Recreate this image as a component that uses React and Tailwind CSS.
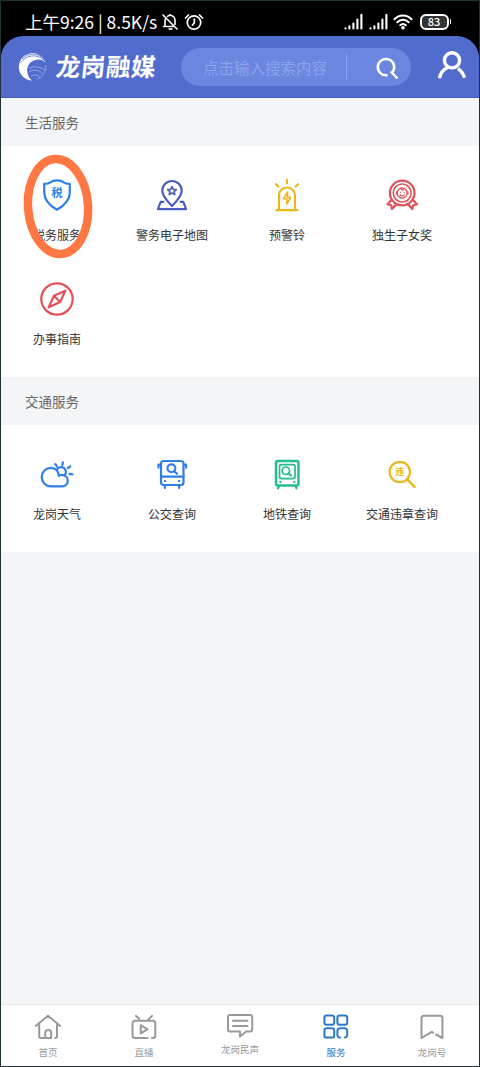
import React from "react";

const stroke = {
  fill: "none",
  stroke: "currentColor",
  strokeLinecap: "round",
  strokeLinejoin: "round",
};

const ServiceIcon = ({ className, children }) => (
  <svg viewBox="0 0 40 40" className={`h-10 w-10 ${className}`} strokeWidth="2.200" {...stroke}>
    {children}
  </svg>
);

const TaxIcon = () => (
  <ServiceIcon className="text-[#2f7fe6]">
    <path d="M20 5.3c-3 0-5.2.7-6.6 2-1.6 1.2-3.5 1.7-6.2 1.6v8.3c0 8 5.8 13.6 12.8 17.5 7-3.9 12.8-9.5 12.8-17.5V8.9c-2.7.1-4.6-.4-6.2-1.6-1.4-1.3-3.6-2-6.6-2z" />
    <text x="20" y="22" fontSize="11" fontWeight="700" textAnchor="middle" fill="currentColor" stroke="none">
      税
    </text>
  </ServiceIcon>
);

const MapIcon = () => (
  <ServiceIcon className="text-[#4a5fc0]">
    <path d="M20 31c-3.500-3.800-9.700-9.500-9.700-15.300a9.700 9.700 0 0 1 19.400 0C29.700 21.500 23.500 27.200 20 31z" />
    <path d="m20 11.600 1.300 2.700 3 .3-2.200 2 .6 3-2.700-1.500-2.700 1.500.6-3-2.200-2 3-.3z" strokeWidth="1.700" />
    <path d="M11.500 26.800H8.700L5.900 34.200h28.200l-2.800-7.400h-2.800" />
  </ServiceIcon>
);

const AlarmIcon = () => (
  <ServiceIcon className="text-[#edb61e]">
    <path d="M12 34.500V20.500a8 8 0 0 1 16 0v14M9.700 35.200h20.800M20 4.800v3.600M8.900 9.200l2.500 2.300M31.100 9.200l-2.500 2.300" />
    <path d="m20.500 17-4 6.800h3.200V29l4-6.600h-3.200z" strokeWidth="1.600" />
  </ServiceIcon>
);

const MedalIcon = () => (
  <ServiceIcon className="text-[#e25159]">
    <circle cx="20.200" cy="18" r="12.300" />
    <circle cx="20.200" cy="18" r="9" strokeWidth="1.500" />
    <circle cx="20.200" cy="18" r="5" strokeWidth="1.300" />
    <path d="M18.300 17.300h.1M22.100 17.300h.1M18.200 19.800c1 1.500 3 1.500 4 0M19 13.500c.3 1.200 1.400 1.600 2.400 1.300M14.500 17v2M25.900 17v2" strokeWidth="1.300" />
    <path d="m9 25.500-3.600 3.800 3.700.9.900 3.700 5-5M31.400 25.500l3.600 3.800-3.700.9-.9 3.700-5-5" />
  </ServiceIcon>
);

const GuideIcon = () => (
  <ServiceIcon className="text-[#e25159]">
    <circle cx="20" cy="20" r="15.700" />
    <path d="M28.300 11.700 17 16.800l-5.300 11.500L23.200 23zM17 16.800l6.200 6.200" />
  </ServiceIcon>
);

const WeatherIcon = () => (
  <ServiceIcon className="text-[#2f7fe6]">
    <path d="M14 13.800a9.300 9.300 0 0 0 0 18.600h11.200a5.700 5.700 0 0 0 1.400-11.200c-1.500-.4-3.300-.2-4.800.6-.2-4.500-3.300-8-7.800-8z" />
    <path d="M19.800 15.800a4.800 4.800 0 1 1 7.700 5.500M18.300 10.200l1.900 2.400M25.900 8.300l-.6 2.600M33.300 12.300 31 14M35.500 20.400l-3-.5" />
  </ServiceIcon>
);

const BusIcon = () => (
  <ServiceIcon className="text-[#2f7fe6]">
    <rect x="9" y="7" width="22.500" height="24" rx="2.500" />
    <path d="M9 22.700h22.500M12.800 31.500V34M27.200 31.500V34M8 10.500H6.500v3.200M32.500 10.500H34v3.200M12.800 27h.4M26.900 27h.4M22.300 17.200l2.700 2.600" />
    <circle cx="19.400" cy="14.300" r="3.900" />
  </ServiceIcon>
);

const MetroIcon = () => (
  <ServiceIcon className="text-[#24bd8c]">
    <rect x="9" y="7" width="22.500" height="24.500" rx="2" strokeWidth="2.400" />
    <rect x="12.500" y="10.600" width="15.500" height="14" rx="2" strokeWidth="1.700" />
    <path d="m12 32-1 2.300M28.500 32l1 2.300M13.200 28h.4M27 28h.4M21.600 19.500l2.300 2" />
    <circle cx="18.900" cy="16.700" r="3.700" strokeWidth="1.700" />
  </ServiceIcon>
);

const ViolationIcon = () => (
  <ServiceIcon className="text-[#edb61e]">
    <circle cx="17.800" cy="18" r="10.200" />
    <path d="m25.500 25.700 7 7.200" strokeWidth="2.500" />
    <text x="17.800" y="21.300" fontSize="9" fontWeight="700" textAnchor="middle" fill="currentColor" stroke="none">
      违
    </text>
  </ServiceIcon>
);

const lifeServices = [
  { name: "税务服务", icon: TaxIcon, marked: true },
  { name: "警务电子地图", icon: MapIcon },
  { name: "预警铃", icon: AlarmIcon },
  { name: "独生子女奖", icon: MedalIcon },
  { name: "办事指南", icon: GuideIcon },
];

const trafficServices = [
  { name: "龙岗天气", icon: WeatherIcon },
  { name: "公交查询", icon: BusIcon },
  { name: "地铁查询", icon: MetroIcon },
  { name: "交通违章查询", icon: ViolationIcon },
];

const tabs = [
  {
    name: "首页",
    icon: <path d="M3.700 15 16 4.800 28.300 15M7.200 13v12.500c0 1 .6 1.500 1.500 1.500h10.500v-5a3 3 0 0 0-6 0v5M25 13v12.500c0 1-.6 1.500-1.800 1.500" />,
  },
  {
    name: "直播",
    icon: <path d="M19.500 27H7a2.500 2.500 0 0 1-2.500-2.500V12.300A2.500 2.500 0 0 1 7 9.800h17.800a2.500 2.500 0 0 1 2.500 2.500v12.200a2.500 2.500 0 0 1-2.500 2.500h-1M8 4.900l3 2.900M24 4.900l-4.500 4.500M12.700 14.200v8.200l6.700-4.100z" />,
  },
  {
    name: "龙岗民声",
    raised: true,
    icon: <path d="M15.500 21.500H6a2 2 0 0 1-2-2V7a2 2 0 0 1 2-2h20.200a2 2 0 0 1 2 2v12.500a2 2 0 0 1-2 2h-4L16 26.500v-5M9 10.700h14.500M9 16h14.500" />,
  },
  {
    name: "服务",
    active: true,
    icon: (
      <>
        <rect x="4.400" y="4.500" width="9.800" height="9.300" rx="2.200" />
        <rect x="17.400" y="4.500" width="9.800" height="9.300" rx="2.200" />
        <rect x="4.400" y="17.300" width="9.800" height="9.300" rx="2.200" />
        <path d="M20 26.600a2.500 2.500 0 0 1-2.600-2.400v-4.500a2.400 2.400 0 0 1 2.400-2.400h5a2.400 2.400 0 0 1 2.400 2.400v4.500a2.400 2.400 0 0 1-2.400 2.400" />
      </>
    ),
  },
  {
    name: "龙岗号",
    icon: <path d="M20 23.500l6.400 3.500V7a2.200 2.200 0 0 0-2.200-2.200H7.700A2.200 2.200 0 0 0 5.500 7v20l10.300-6.200 1.500 1" />,
  },
];

const Signal = () => (
  <svg viewBox="0 0 19 17" className="h-[17px] w-[19px]" stroke="white" strokeWidth="2.100" strokeLinecap="round">
    <path d="M1.500 15.300v.2M5.400 13.300v2.200M9.400 10.500v5M13.400 6.500v9M17.400 1.800v13.700" />
  </svg>
);

const StatusBar = () => (
  <div className="flex h-[35px] items-center bg-black pt-[6px] pr-[28px] pl-6 text-white">
    <span className="w-[136px] whitespace-nowrap text-[17.500px] leading-none">
      上午9:26 | 8.5K/s
    </span>
    <svg viewBox="0 0 18 18" className="h-[18px] w-[18px]" strokeWidth="1.600" {...stroke}>
      <path d="M2.500 13.500h11M4 13.500V8c0-1 .2-1.700.6-2.400M6.500 3.300C9.500 1 14 3 14 7.500v4M8 16h3M9 1.500v1M2 2l14 14" />
    </svg>
    <svg viewBox="0 0 20 18" className="ml-[5px] h-[18px] w-5" strokeWidth="1.700" {...stroke}>
      <circle cx="10" cy="9.500" r="6.700" />
      <path d="M10.300 6v4L8.500 12M1.500 5l3-3M18.500 5l-3-3" />
    </svg>
    <div className="ml-auto flex items-center">
      <Signal />
      <div className="ml-[6px]"><Signal /></div>
      <svg viewBox="0 0 20 16" className="ml-[5px] h-4 w-5" strokeWidth="2" {...stroke}>
        <path d="M1.500 5.300c4.700-5 12.300-5 17 0M4.300 8.300c3.200-3.300 8.200-3.300 11.400 0M7.200 11.200c1.700-1.500 3.900-1.500 5.600 0" />
        <circle cx="10" cy="13.800" r=".8" fill="white" />
      </svg>
      <div className="ml-[7px] flex h-4 w-[29px] items-center justify-center rounded-[6px] border-2 border-white bg-[#333] text-[11px] font-medium leading-none">
        83
      </div>
      <div className="ml-px h-[5px] w-[1.500px] rounded bg-white" />
    </div>
  </div>
);

const Header = () => (
  <div className="bg-black">
    <div className="flex h-[62px] items-center rounded-t-[22px] border-b border-[#435abb] bg-[#526cce] pl-[17px] pr-[12px]">
      <svg viewBox="0 0 30 30" className="h-[30px] w-[30px]">
        <path d="M14 28.500A13.700 13.700 0 1 1 27.500 10.500C24 6.500 17.500 6.500 13 10 7.500 14.500 8 23.500 14 28.500z" fill="white" />
        <path d="M4 7C10 .5 21 0 26 8M2.500 11C8 3 19 1 27 9" fill="none" stroke="#526cce" strokeWidth=".8" />
        <path d="M11 16.500c5-3 12-1.500 16.500 2M11 20c4-3 10-2.500 14 2M13 24.500c2-2 6-2 9 1M28 13c.8 5-2 11-9 14.500" fill="none" stroke="#a3b3ec" strokeWidth=".8" />
      </svg>
      <h1 className="ml-[8px] w-[101px] -skew-x-6 whitespace-nowrap text-[24.500px] font-bold leading-none tracking-[0.600px] text-white">
        龙岗融媒
      </h1>
      <div className="ml-[24px] flex h-[38px] w-[230px] shrink-0 items-center rounded-full bg-[#6b86df] pl-[22px] pr-[12px] text-[#8ca3ee]">
        <span className="mt-[2px] whitespace-nowrap text-[15.500px] leading-none">点击输入搜索内容</span>
        <div className="ml-[19px] h-[25px] w-px bg-[#8ca3ee]" />
        <svg viewBox="0 0 24 24" className="mt-[2px] ml-auto h-6 w-6 text-white" strokeWidth="2.500" {...stroke} strokeLinecap="butt">
          <path d="M12.500 19.200A8.200 8.200 0 1 1 17 16.700M15.800 15.500l6.700 7" />
        </svg>
      </div>
      <svg viewBox="0 0 30 30" className="mb-1 ml-auto h-[30px] w-[30px] shrink-0 text-white" strokeWidth="3.400" {...stroke} strokeLinecap="butt">
        <circle cx="15" cy="10.300" r="7.600" />
        <path d="M2.500 28.200c.8-4.800 3.500-8.500 8-10.700M21 18.700c3.200 2.200 5.300 5 6.500 9" />
      </svg>
    </div>
  </div>
);

const ServiceSection = ({ title, items }) => (
  <section>
    <h2 className="flex h-12 items-center pl-6 text-[13.500px] text-[#666]">{title}</h2>
    <div className="bg-white pt-[28.500px] pb-[26px]">
      <div className="-ml-[1.500px] grid w-[460px] grid-cols-4 gap-y-[32.500px]">
        {items.map(({ name, icon: Icon, marked }) => (
          <div key={name} className="relative flex h-[72px] flex-col items-center">
            <Icon />
            <span className="mt-[11px] whitespace-nowrap text-[12px] leading-[18px] text-[#333]">{name}</span>
            {/* hand-drawn highlight over the entry */}
            {marked && (
              <svg viewBox="0 0 72 108" className="absolute -top-[23px] left-[22px] h-[108px] w-[72px]">
                <ellipse cx="36" cy="54.500" rx="30" ry="47.500" transform="rotate(-4 36 54)" fill="none" stroke="#ff7843" strokeWidth="8.500" />
              </svg>
            )}
          </div>
        ))}
      </div>
    </div>
  </section>
);

const TabBar = () => (
  <nav className="-mx-px mt-auto grid h-[62px] grid-cols-5 border-t border-[#e6e7e9] bg-white">
    {tabs.map((tab) => (
      <div
        key={tab.name}
        className={`flex flex-col items-center ${tab.raised ? "pt-[5px]" : "pt-[6px]"} ${tab.active ? "text-[#2b79c9]" : "text-[#999]"}`}
      >
        <svg viewBox="0 0 32 32" className="h-8 w-8" strokeWidth="2" {...stroke}>
          {tab.icon}
        </svg>
        <span className={`whitespace-nowrap text-[9.500px] leading-[14px] ${tab.raised ? "" : "mt-[2px]"}`}>
          {tab.name}
        </span>
      </div>
    ))}
  </nav>
);

const App = () => {
  return (
    <div className="flex h-[1067px] w-[480px] flex-col overflow-hidden border border-[#1f3432] bg-[#f4f5f7] font-['Noto_Sans_CJK_SC',sans-serif]">
      <StatusBar />
      <Header />
      <main>
        <ServiceSection title="生活服务" items={lifeServices} />
        <ServiceSection title="交通服务" items={trafficServices} />
      </main>
      <TabBar />
    </div>
  );
};

export default App;
